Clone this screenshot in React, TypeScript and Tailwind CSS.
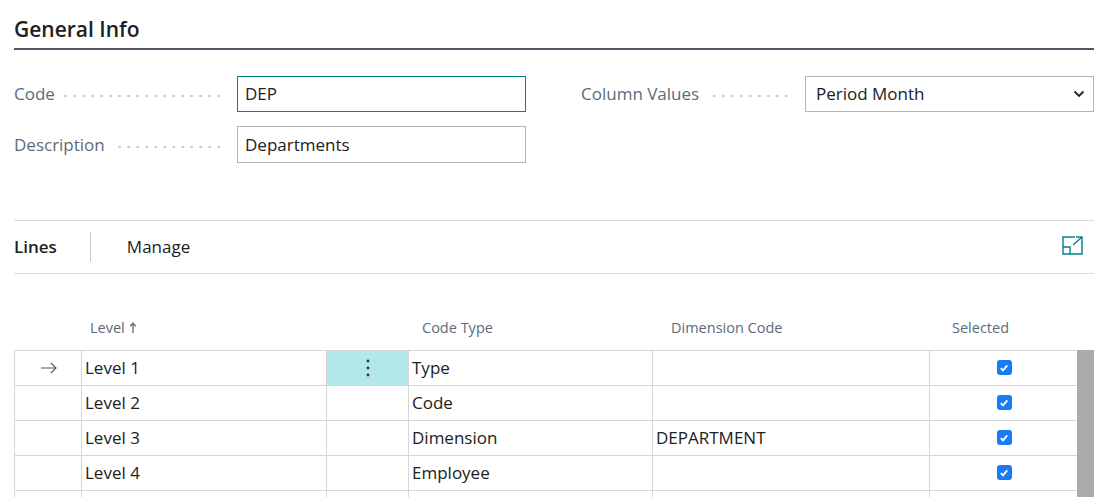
import React from 'react';

const font = { fontFamily: '"Segoe UI", "Open Sans", "Noto Sans", sans-serif' };

const rows = [
  { level: 'Level 1', codeType: 'Type', dim: '', active: true },
  { level: 'Level 2', codeType: 'Code', dim: '' },
  { level: 'Level 3', codeType: 'Dimension', dim: 'DEPARTMENT' },
  { level: 'Level 4', codeType: 'Employee', dim: '' },
  { level: '', codeType: '', dim: '' },
];

// dotted leader between a label and its field
function Dots() {
  return (
    <div className="flex-1 ml-[8px] mr-[14px] mt-[4px] h-[4px] bg-[radial-gradient(circle,#c3c8cf_1px,transparent_1.6px)] bg-[length:9px_4px] bg-repeat-x bg-right" />
  );
}

function Check() {
  return (
    <div className="w-[15px] h-[15px] rounded-[3px] bg-[#1a7cf5] flex items-center justify-center">
      <svg width="10" height="10" viewBox="0 0 10 10">
        <path d="M1.8 5.2 L4 7.4 L8.3 2.4" stroke="white" strokeWidth="1.8" fill="none" />
      </svg>
    </div>
  );
}

function ExpandIcon() {
  return (
    <svg width="21" height="19" viewBox="0 0 21 19" fill="none" stroke="#00838a" strokeWidth="1.4">
      <path d="M13 1 H1 V18 H20 V6" />
      <path d="M1 11 H8 V18" />
      <path d="M11 9 L19.5 1.5 M14 1 H20 V7" />
    </svg>
  );
}

export default function App() {
  return (
    <div className="w-[1104px] h-[497px] bg-white overflow-hidden text-[#212121]" style={font}>
      <div className="pl-[14px] pr-[10px] pt-[14px]">
        <div className="text-[21px] font-semibold leading-[30px] pb-[4px] border-b-2 border-[#4f5a69]">
          General Info
        </div>

        <div className="flex mt-[26px]">
          <div className="w-[512px] flex flex-col gap-[14px]">
            <div className="flex items-center h-[36px]">
              <div className="w-[223px] flex items-center text-[17px] text-[#5c6b7c]">
                <span>Code</span>
                <Dots />
              </div>
              <div className="flex-1 h-[36px] border border-[#00838a] flex items-center px-[7px] text-[17px]">DEP</div>
            </div>
            <div className="flex items-center h-[37px]">
              <div className="w-[223px] flex items-center text-[17px] text-[#5c6b7c]">
                <span>Description</span>
                <Dots />
              </div>
              <div className="flex-1 h-[37px] border border-[#b4b4b4] flex items-center px-[7px] text-[17px]">Departments</div>
            </div>
          </div>
          <div className="ml-[55px] flex-1 flex items-start">
            <div className="flex items-center h-[36px] w-[224px] text-[17px] text-[#5c6b7c]">
              <span>Column Values</span>
              <Dots />
            </div>
            <div className="flex-1 h-[36px] border border-[#b4b4b4] flex items-center justify-between pl-[10px] pr-[8px] text-[17px]">
              <span>Period Month</span>
              <svg width="12" height="8" viewBox="0 0 12 8">
                <path d="M1.5 1.5 L6 6 L10.5 1.5" stroke="#222" strokeWidth="1.8" fill="none" />
              </svg>
            </div>
          </div>
        </div>

        <div className="mt-[57px] border-t border-[#d9d9d9]" />
        <div className="flex items-center h-[53px] border-b border-[#d9d9d9]">
          <span className="text-[17px] font-semibold">Lines</span>
          <div className="ml-[33px] w-px h-[30px] bg-[#c8c8c8]" />
          <span className="ml-[36px] text-[17px]">Manage</span>
          <div className="ml-auto mr-[11px] mt-[-4px]">
            <ExpandIcon />
          </div>
        </div>

        <div className="flex h-[76px] items-end pb-[11px] text-[14.5px] text-[#5c6b7c]">
          <div className="w-[76px]" />
          <div className="w-[332px] flex items-center gap-[4px]">
            Level
            <svg width="8" height="12" viewBox="0 0 8 12">
              <path d="M4 11 V1.5 M1.2 4.2 L4 1.2 L6.8 4.2" stroke="#5c6b7c" strokeWidth="1.3" fill="none" />
            </svg>
          </div>
          <div className="w-[249px]">Code Type</div>
          <div className="w-[281px]">Dimension Code</div>
          <div>Selected</div>
        </div>

        <div className="flex">
          <div className="w-[1063px] border-l border-[#d6d6d9]">
            {rows.map((r, i) => (
              <div key={i} className="flex h-[35px] border-t border-[#d6d6d9] text-[17px]">
                <div className="w-[67px] border-r border-[#d6d6d9] flex items-center justify-center pl-[2px]">
                  {r.active && (
                    <svg width="18" height="12" viewBox="0 0 18 12">
                      <path d="M1 6 H16 M11 1 L16 6 L11 11" stroke="#555" strokeWidth="1.1" fill="none" />
                    </svg>
                  )}
                </div>
                <div className="w-[245px] border-r border-[#d6d6d9] flex items-center pl-[3px]">{r.level}</div>
                <div
                  className={
                    'w-[82px] border-r border-[#d6d6d9] flex items-center justify-center ' +
                    (r.active ? 'bg-[#b2e8ec]' : '')
                  }
                >
                  {r.active && (
                    <svg width="4" height="20" viewBox="0 0 4 20">
                      <circle cx="2" cy="3" r="1.4" fill="#333" />
                      <circle cx="2" cy="10" r="1.4" fill="#333" />
                      <circle cx="2" cy="17" r="1.4" fill="#333" />
                    </svg>
                  )}
                </div>
                <div className="w-[244px] border-r border-[#d6d6d9] flex items-center pl-[3px]">{r.codeType}</div>
                <div className="w-[277px] border-r border-[#d6d6d9] flex items-center pl-[3px]">{r.dim}</div>
                <div className="flex-1 flex items-center justify-center pl-[1px] pb-[1px]">
                  {r.level && <Check />}
                </div>
              </div>
            ))}
          </div>
          <div className="w-[17px] h-[147px] bg-[#ababab]" />
        </div>
      </div>
    </div>
  );
}
